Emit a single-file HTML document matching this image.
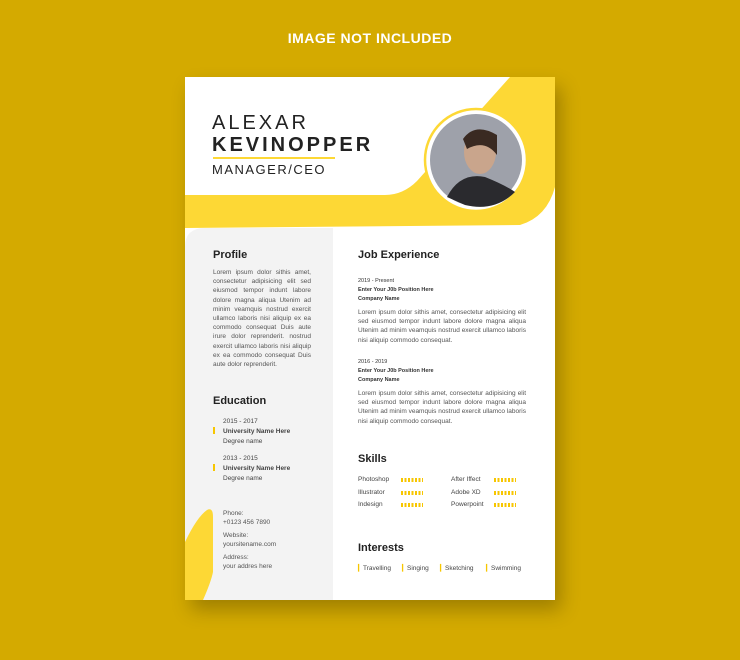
<!DOCTYPE html><html><head><style>
body{margin:0;width:740px;height:660px;background:#d4aa00;position:relative;overflow:hidden;font-family:"Liberation Sans",sans-serif;color:#333}
.a{position:absolute}
.t{font-size:6.5px;line-height:9.2px;color:#555;text-align:justify}
h3{position:absolute;margin:0;font-size:11px;font-weight:bold;color:#222}
.s{font-size:6.5px;color:#444;position:absolute}
.bar{position:absolute;width:22px;height:4px;background:repeating-linear-gradient(90deg,#f7c600 0 2px,transparent 2px 3.5px)}
</style></head><body>
<div class="a" style="left:0;top:30px;width:740px;text-align:center;color:#fff;font-weight:bold;font-size:14px;letter-spacing:.5px">IMAGE NOT INCLUDED</div>
<div class="a" style="left:185px;top:77px;width:370px;height:523px;background:#fff;box-shadow:6px 10px 18px rgba(0,0,0,.25)"></div>
<svg class="a" style="left:185px;top:77px" width="370" height="523">
<path d="M0,118 L200,118 Q218,118 232,104 L325,0 L370,0 L370,110 Q362,140 335,148 L0,151 Z" fill="#fdd835"/>
<path d="M0,151 L148,151 L148,523 L0,523 L0,170 Q0,151 20,151 Z" fill="#f3f3f3"/>
<path d="M0,465 Q12,440 22,433 Q28,430 28,440 L28,495 Q26,505 18,523 L0,523 Z" fill="#fdd835"/>
<circle cx="291" cy="83" r="51" fill="#fff" stroke="#fdd835" stroke-width="2.5"/>
<circle cx="291" cy="83" r="46" fill="#9ea1aa"/>
<path d="M262,120 Q275,95 300,100 Q320,108 330,115 Q310,135 280,128 Z" fill="#2a2a2e"/>
<ellipse cx="295" cy="75" rx="16" ry="22" fill="#c9a58c"/>
<path d="M278,62 Q290,45 312,58 L312,78 Q300,62 282,72 Z" fill="#3a2a22"/>
</svg>
<div class="a" style="left:212px;top:112px;font-size:20px;letter-spacing:3px;color:#222">ALEXAR</div>
<div class="a" style="left:212px;top:134px;font-size:20px;font-weight:bold;letter-spacing:3px;color:#222">KEVINOPPER</div>
<div class="a" style="left:213px;top:157px;width:122px;height:2px;background:#fdd835"></div>
<div class="a" style="left:212px;top:162px;font-size:13px;letter-spacing:1.5px;color:#222">MANAGER/CEO</div>
<h3 style="left:213px;top:249px">Profile</h3>
<div class="a t" style="left:213px;top:268px;width:98px">Lorem ipsum dolor sithis amet, consectetur adipisicing elit sed eiusmod tempor indunt labore dolore magna aliqua Utenim ad minim veamquis nostrud exercit ullamco laboris nisi aliquip ex ea commodo consequat Duis aute irure dolor reprenderit. nostrud exercit ullamco laboris nisi aliquip ex ea commodo consequat Duis aute dolor reprenderit.</div>
<h3 style="left:213px;top:395px">Education</h3>
<div class="a" style="left:223px;top:417px;font-size:6.5px;line-height:10px;color:#444">2015 - 2017<br><b>University Name Here</b><br>Degree name</div>
<div class="a" style="left:213px;top:427px;width:2px;height:7px;background:#f7c600"></div>
<div class="a" style="left:223px;top:454px;font-size:6.5px;line-height:10px;color:#444">2013 - 2015<br><b>University Name Here</b><br>Degree name</div>
<div class="a" style="left:213px;top:464px;width:2px;height:7px;background:#f7c600"></div>
<div class="a" style="left:223px;top:509px;font-size:6.5px;line-height:9px;color:#555">Phone:<br>+0123 456 7890<div style="height:4px"></div>Website:<br>yoursitename.com<div style="height:4px"></div>Address:<br>your addres here</div>
<h3 style="left:358px;top:249px">Job Experience</h3>
<div class="a" style="left:358px;top:277px;font-size:5.5px;line-height:9px;color:#333">2019 - Present<br><b>Enter Your J0b Position Here</b><br><b>Company Name</b></div>
<div class="a t" style="left:358px;top:308px;width:168px">Lorem ipsum dolor sithis amet, consectetur adipisicing elit sed eiusmod tempor indunt labore dolore magna aliqua Utenim ad minim veamquis nostrud exercit ullamco laboris nisi aliquip commodo consequat.</div>
<div class="a" style="left:358px;top:358px;font-size:5.5px;line-height:9px;color:#333">2016 - 2019<br><b>Enter Your J0b Position Here</b><br><b>Company Name</b></div>
<div class="a t" style="left:358px;top:389px;width:168px">Lorem ipsum dolor sithis amet, consectetur adipisicing elit sed eiusmod tempor indunt labore dolore magna aliqua Utenim ad minim veamquis nostrud exercit ullamco laboris nisi aliquip commodo consequat.</div>
<h3 style="left:358px;top:453px">Skills</h3>
<div class="s" style="left:358px;top:476px">Photoshop</div><div class="bar" style="left:401px;top:478px"></div>
<div class="s" style="left:358px;top:489px">Illustrator</div><div class="bar" style="left:401px;top:491px"></div>
<div class="s" style="left:358px;top:501px">Indesign</div><div class="bar" style="left:401px;top:503px"></div>
<div class="s" style="left:451px;top:476px">After Iffect</div><div class="bar" style="left:494px;top:478px"></div>
<div class="s" style="left:451px;top:489px">Adobe XD</div><div class="bar" style="left:494px;top:491px"></div>
<div class="s" style="left:451px;top:501px">Powerpoint</div><div class="bar" style="left:494px;top:503px"></div>
<h3 style="left:358px;top:542px">Interests</h3>
<div class="s" style="left:358px;top:564px"><span style="color:#f7c600">▎</span>Travelling</div>
<div class="s" style="left:402px;top:564px"><span style="color:#f7c600">▎</span>Singing</div>
<div class="s" style="left:440px;top:564px"><span style="color:#f7c600">▎</span>Sketching</div>
<div class="s" style="left:486px;top:564px"><span style="color:#f7c600">▎</span>Swimming</div>
</body></html>
